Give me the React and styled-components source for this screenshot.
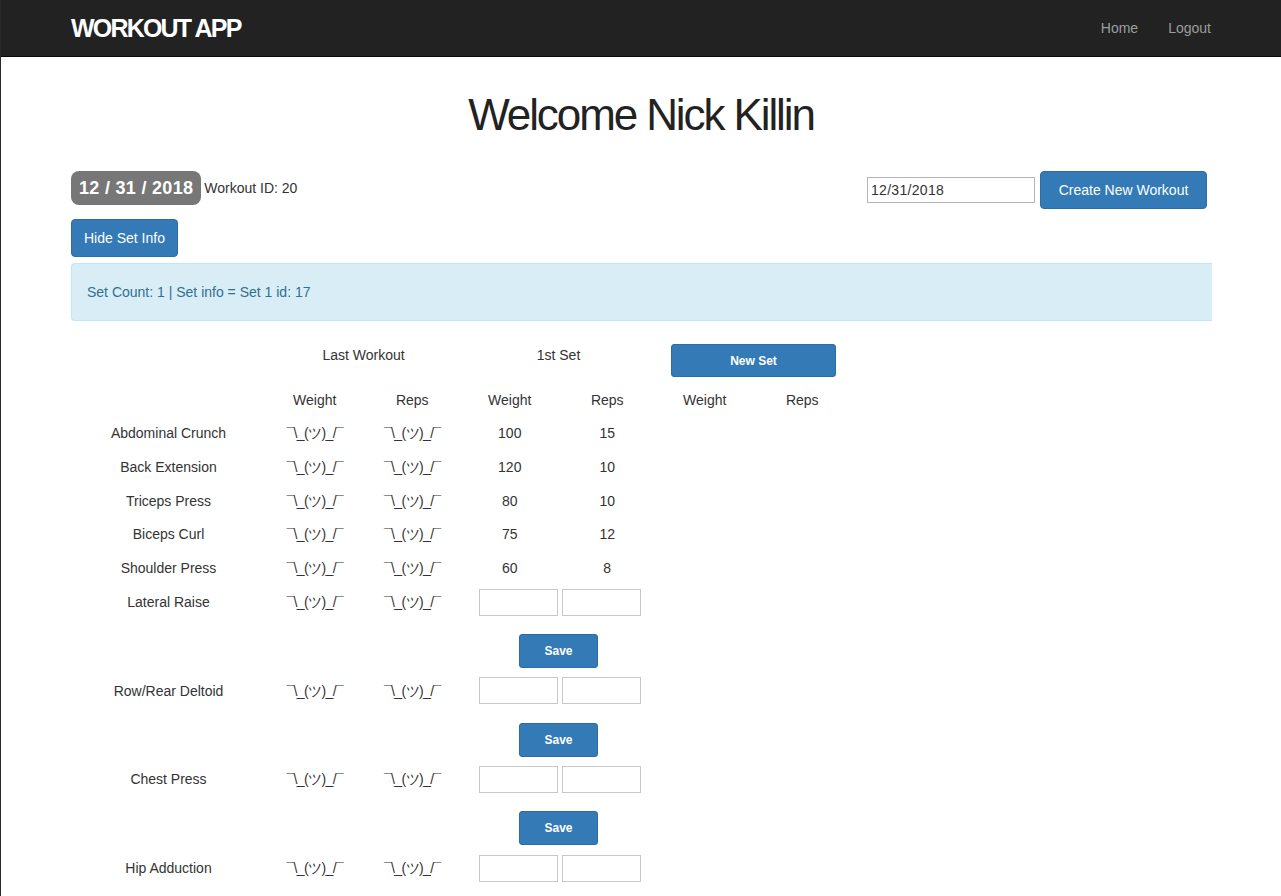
import React from "react";
import styled, { createGlobalStyle } from "styled-components";

const GlobalStyle = createGlobalStyle`
  * { box-sizing: border-box; }
  body {
    margin: 0;
    font-family: "Liberation Sans", Helvetica, Arial, sans-serif;
    font-size: 14px;
    line-height: 20px;
    color: #333;
    background: #fff;
  }
`;

const Page = styled.div`
  min-height: 100vh;
  border-left: 1px solid #2a2a2a;
`;

const NavBar = styled.nav`
  height: 57px;
  background: #222;
  border-bottom: 1px solid #080808;
`;

const Container = styled.div`
  width: 1170px;
  margin: 0 auto;
  padding: 0 15px;
`;

const NavInner = styled(Container)`
  height: 100%;
  display: flex;
  align-items: center;
  justify-content: space-between;
`;

const Brand = styled.a`
  color: #fff;
  font-weight: bold;
  font-size: 25px;
  letter-spacing: -1.8px;
  text-decoration: none;
  margin-top: -1px;
`;

const NavLinks = styled.div`
  display: flex;
  gap: 30px;
  margin-right: 0;
`;

const NavLink = styled.a`
  color: #9d9d9d;
  font-size: 14px;
  text-decoration: none;
`;

const Title = styled.h1`
  margin: 34px 0 32px;
  text-align: center;
  font-size: 44px;
  line-height: 48px;
  font-weight: normal;
  letter-spacing: -2.1px;
  color: #222;
`;

const TopRow = styled.div`
  display: flex;
  justify-content: space-between;
  align-items: flex-start;
`;

const DateInfo = styled.div`
  display: flex;
  align-items: center;
  gap: 3px;
`;

const Badge = styled.span`
  display: inline-block;
  background: #777;
  color: #fff;
  font-weight: bold;
  font-size: 18px;
  letter-spacing: 0.3px;
  line-height: 34px;
  height: 34px;
  padding: 0 8px;
  border-radius: 8px;
`;

const NewWorkout = styled.div`
  display: flex;
  align-items: center;
  gap: 5px;
  margin-right: 4px;
`;

const DateInput = styled.input`
  width: 168px;
  height: 26px;
  border: 1px solid #b5b5b5;
  padding: 0 3px;
  font-family: "Liberation Sans", Arial, sans-serif;
  font-size: 14px;
  letter-spacing: 0.3px;
  color: #333;
`;

const Button = styled.button`
  background: #337ab7;
  border: 1px solid #2e6da4;
  color: #fff;
  font-family: "Liberation Sans", Arial, sans-serif;
  font-size: ${(p) => (p.$small ? "12px" : "14px")};
  font-weight: ${(p) => (p.$small ? "bold" : "normal")};
  border-radius: ${(p) => (p.$small ? "3px" : "4px")};
  height: ${(p) => p.$h || 38}px;
  width: ${(p) => (p.$w ? `${p.$w}px` : "auto")};
  padding: 0 ${(p) => (p.$small ? 10 : 12)}px;
  cursor: pointer;
`;

const HideButton = styled(Button)`
  margin-top: 10px;
  display: block;
`;

const Alert = styled.div`
  margin: 6px 0 20px;
  background: #d9edf7;
  border: 1px solid #bce8f1;
  border-right: none;
  border-radius: 4px 0 0 4px;
  color: #31708f;
  padding: 18px 15px;
  height: 58px;
  width: 1141px;
`;

const Row = styled.div`
  display: grid;
  grid-template-columns: 195px repeat(6, 97.5px);
  height: ${(p) => p.$h}px;
  align-items: ${(p) => p.$align || "center"};
  margin: ${(p) => p.$m || "0"};
`;

const Cell = styled.div`
  text-align: center;
  grid-column: ${(p) => p.$col || "auto"};
  padding-top: ${(p) => p.$pt || 0}px;
`;

const Shrug = styled(Cell)`
  letter-spacing: -0.6px;
`;

const Pair = styled.div`
  grid-column: 4 / span 2;
  display: flex;
  justify-content: center;
  gap: 4px;
  padding-left: 2px;
`;

const SetInput = styled.input`
  width: 79px;
  height: 27px;
  border: 1px solid #c8c8c8;
  padding: 0 4px;
`;

const SpanCell = styled.div`
  grid-column: ${(p) => p.$col};
  display: flex;
  justify-content: center;
  padding: ${(p) => p.$pad || "0"};
  margin-top: ${(p) => p.$mt || 0}px;
`;

const shrug = "¯\\_(ツ)_/¯";

const done = [
  ["Abdominal Crunch", "100", "15"],
  ["Back Extension", "120", "10"],
  ["Triceps Press", "80", "10"],
  ["Biceps Curl", "75", "12"],
  ["Shoulder Press", "60", "8"],
];

const pending = ["Lateral Raise", "Row/Rear Deltoid", "Chest Press", "Hip Adduction"];

export default function App() {
  return (
    <Page>
      <GlobalStyle />
      <NavBar>
        <NavInner>
          <Brand href="#">WORKOUT APP</Brand>
          <NavLinks>
            <NavLink href="#">Home</NavLink>
            <NavLink href="#">Logout</NavLink>
          </NavLinks>
        </NavInner>
      </NavBar>
      <Container>
        <Title>Welcome Nick Killin</Title>
        <TopRow>
          <DateInfo>
            <Badge>12 / 31 / 2018</Badge>
            <span>Workout ID: 20</span>
          </DateInfo>
          <NewWorkout>
            <DateInput defaultValue="12/31/2018" />
            <Button $w={167}>Create New Workout</Button>
          </NewWorkout>
        </TopRow>
        <HideButton>Hide Set Info</HideButton>
        <Alert>Set Count: 1 | Set info = Set 1 id: 17</Alert>

        <Row $h={42} $align="start">
          <Cell $col="2 / span 2" $pt={4}>Last Workout</Cell>
          <Cell $col="4 / span 2" $pt={4}>1st Set</Cell>
          <SpanCell $col="6 / span 2" $pad="0 15px" $mt={3}>
            <Button $small $h={33} $w={165}>New Set</Button>
          </SpanCell>
        </Row>
        <Row $h={33.25}>
          <Cell $col="2">Weight</Cell>
          <Cell>Reps</Cell>
          <Cell>Weight</Cell>
          <Cell>Reps</Cell>
          <Cell>Weight</Cell>
          <Cell>Reps</Cell>
        </Row>
        {done.map(([name, w, r]) => (
          <Row key={name} $h={33.75}>
            <Cell>{name}</Cell>
            <Shrug>{shrug}</Shrug>
            <Shrug>{shrug}</Shrug>
            <Cell>{w}</Cell>
            <Cell>{r}</Cell>
          </Row>
        ))}
        {pending.map((name, i) => (
          <React.Fragment key={name}>
            <Row $h={34}>
              <Cell>{name}</Cell>
              <Shrug>{shrug}</Shrug>
              <Shrug>{shrug}</Shrug>
              <Pair>
                <SetInput />
                <SetInput />
              </Pair>
            </Row>
            {i < pending.length - 1 && (
              <Row $h={34} $m="15px 0 5.7px">
                <SpanCell $col="4 / span 2">
                  <Button $small $h={34} $w={79}>Save</Button>
                </SpanCell>
              </Row>
            )}
          </React.Fragment>
        ))}
      </Container>
    </Page>
  );
}
